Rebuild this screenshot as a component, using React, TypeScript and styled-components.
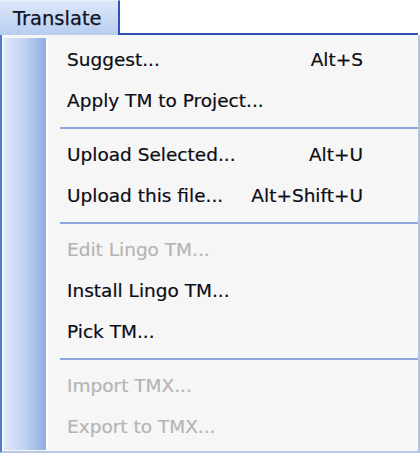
import React from "react";
import styled, { createGlobalStyle } from "styled-components";

const Global = createGlobalStyle`
  html, body { margin: 0; padding: 0; background: #ffffff; }
  body { font-family: "DejaVu Sans", "Noto Sans", sans-serif; }
  *, *::before, *::after { box-sizing: border-box; }
`;

const Frame = styled.div`
  width: 420px;
  height: 453px;
  display: flex;
  flex-direction: column;
  background: #ffffff;
`;

const MenuBar = styled.div`
  display: flex;
  height: 35px;
  flex: none;
`;

const Tab = styled.div`
  width: 120px;
  border-right: 2px solid #2f52b0;
  border-top: 1px solid #e8eefa;
  background: linear-gradient(#dce7f9, #b7cdef);
  display: flex;
  align-items: center;
  padding-left: 13px;
  padding-top: 1px;
  font-size: 19.5px;
  color: #0e1426;
  -webkit-text-stroke: 0.25px #0e1426;
`;

const BarFill = styled.div`
  flex: 1;
  border-bottom: 2px solid #2f52b0;
  margin-right: 2px;
`;

const Menu = styled.div`
  flex: 1;
  display: grid;
  grid-template-columns: 44px 1fr;
  background: #f6f6f6;
  border-left: 2px solid #5078cc;
  border-right: 2px solid #b8c4dc;
  border-bottom: 2px solid #b8c8e6;
  padding: 3px 0 1px 2px;
`;

const Gutter = styled.div`
  background: linear-gradient(to right, #dde8fb, #c3d5f4 45%, #8eaee2);
  border-right: 2px solid #ffffff;
`;

const Items = styled.div`
  display: flex;
  flex-direction: column;
  padding-left: 12px;
`;

const Item = styled.div<{ $disabled?: boolean }>`
  height: 41px;
  flex: none;
  display: flex;
  align-items: center;
  font-size: 18.5px;
  color: ${(p) => (p.$disabled ? "#b4b4b4" : "#0c0c14")};
  -webkit-text-stroke: 0.2px ${(p) => (p.$disabled ? "#b4b4b4" : "#0c0c14")};
  padding-left: 7px;
  padding-right: 55px;
  padding-top: 1px;
`;

const Label = styled.span`
  flex: 1;
`;

const Shortcut = styled.span``;

const Separator = styled.div`
  height: 13px;
  flex: none;
  display: flex;
  align-items: center;
  &::after {
    content: "";
    flex: 1;
    height: 2px;
    background: #8aa8dc;
    margin-top: 2px;
  }
`;

type Entry =
  | { kind: "item"; label: string; shortcut?: string; disabled?: boolean }
  | { kind: "sep" };

const entries: Entry[] = [
  { kind: "item", label: "Suggest...", shortcut: "Alt+S" },
  { kind: "item", label: "Apply TM to Project..." },
  { kind: "sep" },
  { kind: "item", label: "Upload Selected...", shortcut: "Alt+U" },
  { kind: "item", label: "Upload this file...", shortcut: "Alt+Shift+U" },
  { kind: "sep" },
  { kind: "item", label: "Edit Lingo TM...", disabled: true },
  { kind: "item", label: "Install Lingo TM..." },
  { kind: "item", label: "Pick TM..." },
  { kind: "sep" },
  { kind: "item", label: "Import TMX...", disabled: true },
  { kind: "item", label: "Export to TMX...", disabled: true },
];

export default function App() {
  return (
    <Frame>
      <Global />
      <MenuBar>
        <Tab>Translate</Tab>
        <BarFill />
      </MenuBar>
      <Menu>
        <Gutter />
        <Items>
          {entries.map((e, i) =>
            e.kind === "sep" ? (
              <Separator key={i} />
            ) : (
              <Item key={i} $disabled={e.disabled}>
                <Label>{e.label}</Label>
                {e.shortcut && <Shortcut>{e.shortcut}</Shortcut>}
              </Item>
            )
          )}
        </Items>
      </Menu>
    </Frame>
  );
}
